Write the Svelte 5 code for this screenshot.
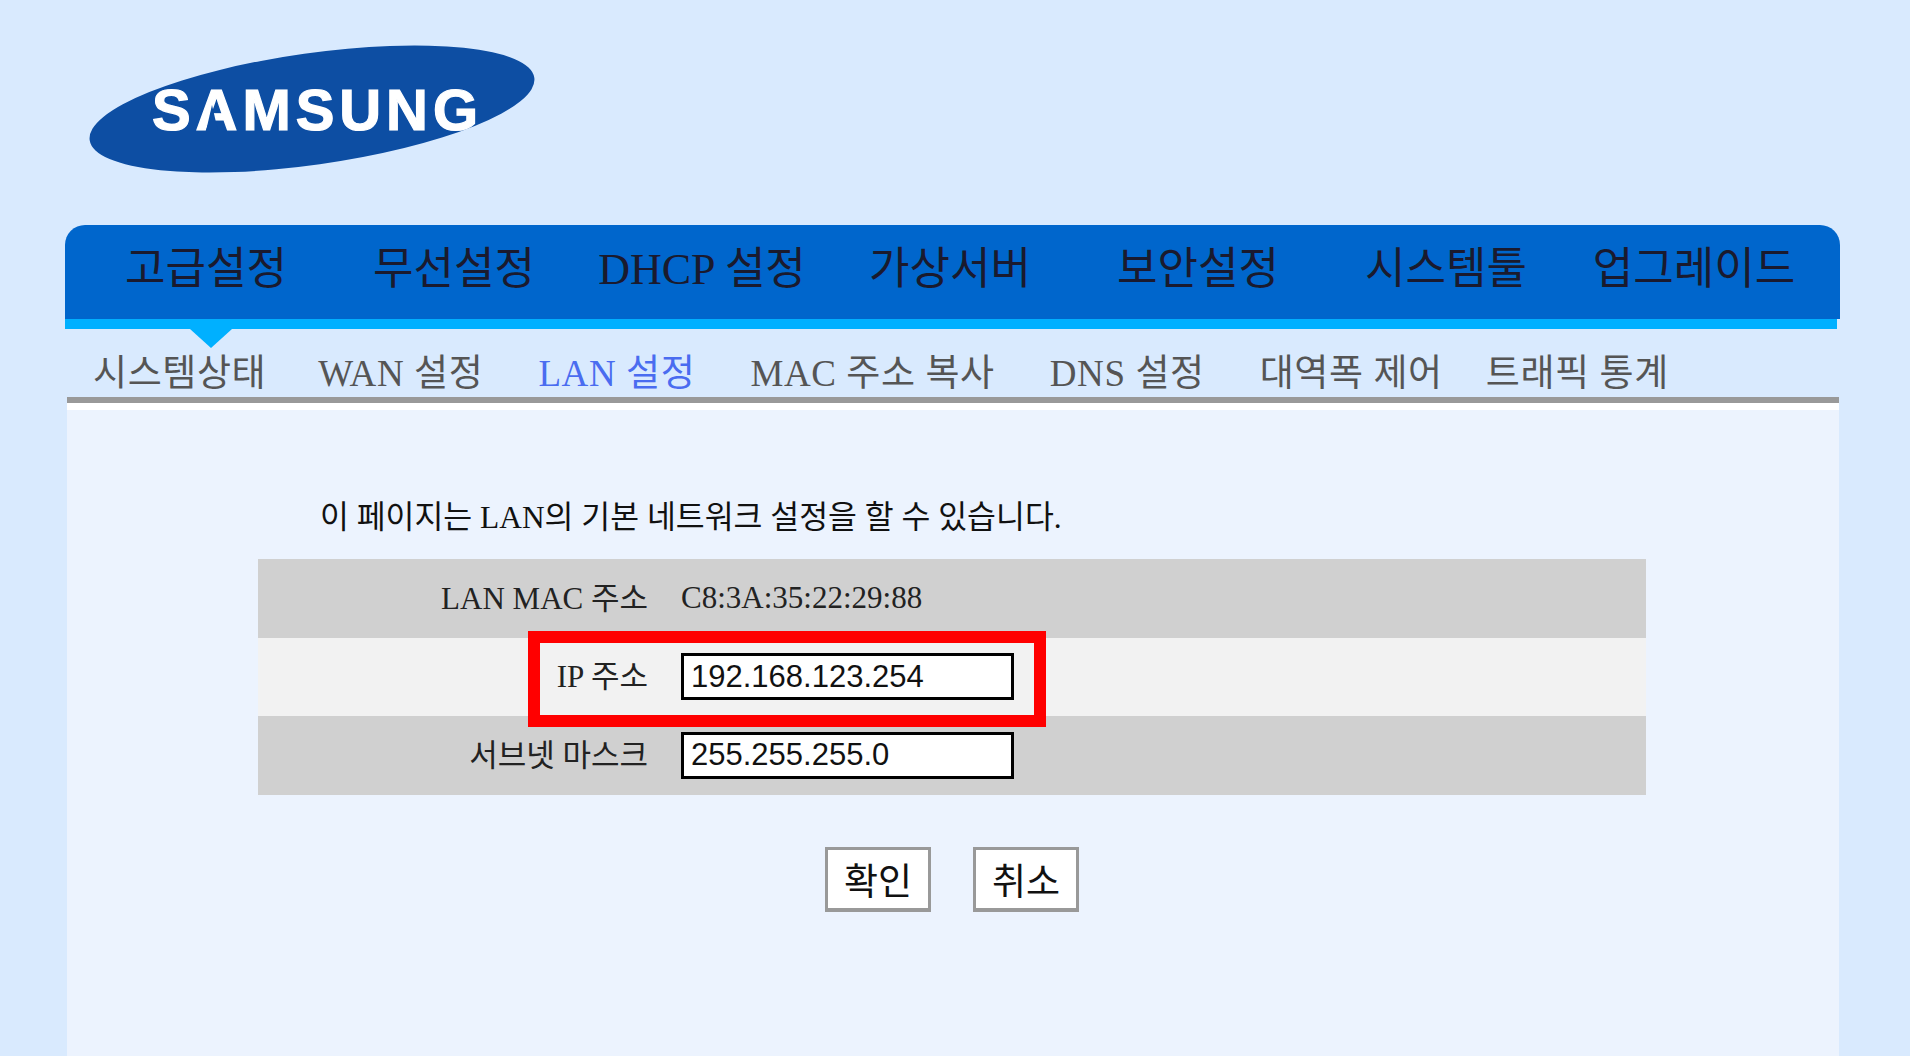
<script>
    const mainMenu = ["고급설정", "무선설정", "DHCP 설정", "가상서버", "보안설정", "시스템툴", "업그레이드"];
    const subMenu = ["시스템상태", "WAN 설정", "LAN 설정", "MAC 주소 복사", "DNS 설정", "대역폭 제어", "트래픽 통계"];
    const activeSub = "LAN 설정";
</script>

<div class="page">
    <header class="logo-area">
        <svg class="logo" width="500" height="190" viewBox="0 0 500 190" aria-label="Samsung">
            <ellipse cx="247" cy="94" rx="224.5" ry="55.8" transform="rotate(-8 247 94)" fill="#0d4ea3" />
            <text class="logo-text" x="87" y="115" textLength="326" lengthAdjust="spacing">SAMSUNG</text>
            <polygon points="141,116 153,116 147,90" fill="#0d4ea3" />
        </svg>
    </header>

    <nav class="main-nav">
        {#each mainMenu as item}
            <div class="main-item">{item}</div>
        {/each}
    </nav>
    <div class="nav-strip"><span class="arrow"></span></div>

    <nav class="sub-nav">
        {#each subMenu as item}
            <span class="sub-item" class:active={item === activeSub}>{item}</span>
        {/each}
    </nav>

    <main class="panel">
        <p class="intro">이 페이지는 LAN의 기본 네트워크 설정을 할 수 있습니다.</p>
        <div class="form-table">
            <div class="row dark">
                <div class="label">LAN MAC 주소</div>
                <div class="value">C8:3A:35:22:29:88</div>
            </div>
            <div class="row light">
                <div class="label">IP 주소</div>
                <div class="value"><input type="text" value="192.168.123.254" /></div>
                <span class="highlight"></span>
            </div>
            <div class="row dark">
                <div class="label">서브넷 마스크</div>
                <div class="value"><input type="text" value="255.255.255.0" /></div>
            </div>
        </div>
        <div class="buttons">
            <button>확인</button>
            <button>취소</button>
        </div>
    </main>
</div>

<style>
    :global(body) {
        background: #d9eafe;
        overflow: hidden;
    }
    .page {
        height: 1056px;
        padding: 0 70px 0 65px;
        box-sizing: border-box;
        overflow: hidden;
        font-family: "Liberation Serif", "Noto Sans CJK KR", serif;
    }
    .logo-area {
        height: 225px;
    }
    .logo {
        display: block;
        padding-top: 15px;
        overflow: visible;
    }
    .logo-text {
        font-family: "Liberation Sans", sans-serif;
        font-weight: 700;
        font-size: 58px;
        fill: #fff;
        stroke: #fff;
        stroke-width: 1.2px;
    }
    .main-nav {
        display: flex;
        height: 94px;
        padding-left: 17px;
        background: #0066cc;
        border-radius: 20px 20px 0 0;
        box-sizing: border-box;
    }
    .main-item {
        width: 248px;
        flex: none;
        text-align: center;
        font-size: 44px;
        line-height: 90px;
        color: #1a1a2e;
        white-space: nowrap;
    }
    .nav-strip {
        position: relative;
        height: 10px;
        margin-right: 3px;
        background: #00b0ff;
    }
    .arrow {
        position: absolute;
        left: 125px;
        top: 10px;
        border-left: 21px solid transparent;
        border-right: 21px solid transparent;
        border-top: 19px solid #00b0ff;
    }
    .sub-nav {
        display: flex;
        gap: 55px;
        height: 68px;
        padding-left: 25px;
        box-sizing: border-box;
        align-items: center;
        padding-top: 14px;
        margin-left: 3px;
    }
    .sub-item {
        font-size: 37px;
        letter-spacing: 0.6px;
        color: #555;
        white-space: nowrap;
    }
    .sub-item:nth-child(2) {
        margin-left: -3px;
    }
    .sub-item:last-child {
        margin-left: -12px;
    }
    .sub-item.active {
        color: #4a6cf0;
    }
    .panel {
        margin-left: 2px;
        margin-right: 1px;
        height: 660px;
        border-top: 6px solid #999;
        background: #ecf3fe;
        box-shadow: inset 0 7px 0 #fff;
        padding: 95px 0 0 191px;
        box-sizing: border-box;
    }
    .intro {
        margin: 0 0 21px 62px;
        font-size: 31.4px;
        line-height: 40px;
        color: #111;
    }
    .form-table {
        width: 1388px;
    }
    .row {
        position: relative;
        display: flex;
        align-items: center;
        height: 78.5px;
        font-size: 31px;
        color: #222;
    }
    .row.dark {
        background: #d0d0d0;
    }
    .row.light {
        background: #f2f2f2;
    }
    .label {
        width: 390px;
        padding-bottom: 6px;
        text-align: right;
        white-space: nowrap;
    }
    .value {
        margin-left: 33px;
    }
    input {
        display: block;
        width: 333px;
        height: 47px;
        padding: 0 7px;
        box-sizing: border-box;
        border: 3px solid #000;
        border-radius: 0;
        background: #fff;
        font-family: "Liberation Sans", sans-serif;
        font-size: 31px;
        color: #111;
    }
    .highlight {
        position: absolute;
        z-index: 1;
        left: 270px;
        top: -7px;
        width: 518px;
        height: 96px;
        border: 12px solid #f00;
        box-sizing: border-box;
    }
    .buttons {
        display: flex;
        gap: 42px;
        margin-top: 52px;
        width: 1388px;
        justify-content: center;
    }
    button {
        width: 106px;
        height: 65px;
        padding: 0;
        background: #fff;
        border: 3px solid #999;
        border-bottom-width: 4px;
        border-radius: 0;
        font-family: "Liberation Serif", "Noto Sans CJK KR", serif;
        font-size: 37px;
        color: #111;
    }
</style>
